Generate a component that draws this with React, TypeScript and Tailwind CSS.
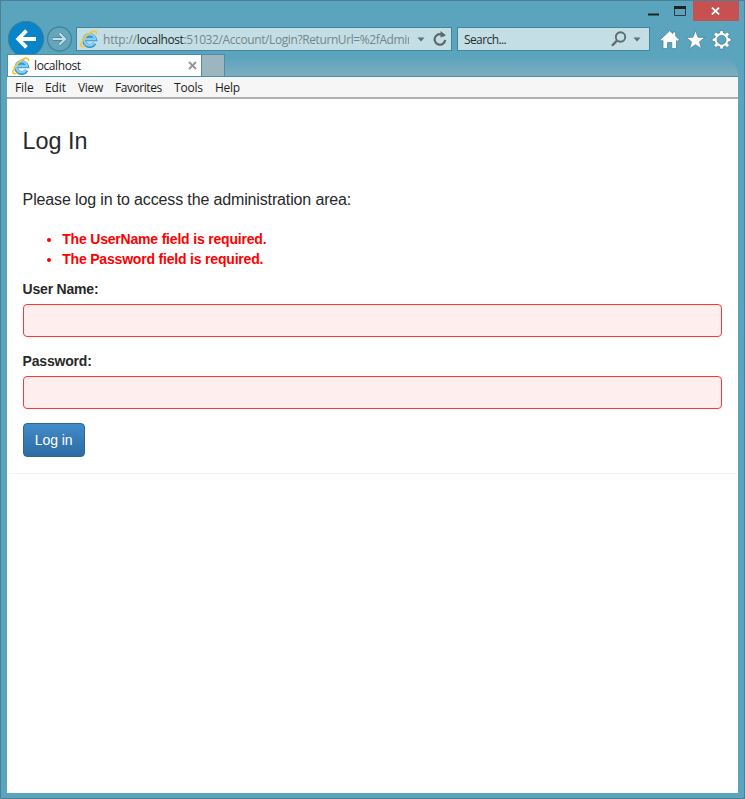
import React from "react";

const chrome = "font-['Open_Sans','Noto_Sans',sans-serif]";

function IeLogo() {
  return (
    <svg width="18" height="18" viewBox="0 0 18 18" fill="none" className="shrink-0">
      <path d="M14.600 13.200A5.500 5.500 0 1 1 15.100 9.200H5.500" stroke="#3a94cf" strokeWidth="3.900" />
      <path d="M14.100 13.100A5.500 5.500 0 1 1 15.100 9.200H5.500" stroke="#7fd0f5" strokeWidth="2.300" />
      <path d="M16.400 4.200C17 1.500 15.400.3 12.300 1.600 7.500 3.500 1.800 10 1 14.200c-.5 2.700 1.400 3 4.200 1.700" stroke="#f4c63a" strokeWidth="1.700" />
    </svg>
  );
}

function Caret() {
  return (
    <svg width="8" height="5" viewBox="0 0 8 5" className="shrink-0">
      <path d="M.5.5h7L4 4.500z" fill="#5d7077" />
    </svg>
  );
}

function TitleBar() {
  return (
    <div className="flex h-5 shrink-0 justify-end pr-[5px]">
      <svg width="38" height="20" viewBox="0 0 38 20">
        <path d="M0 13.500h11" stroke="#222" strokeWidth="2" />
        <path d="M26.500 6v8.500h11V6" stroke="#303a3e" fill="none" />
        <path d="M26 6.500h12" stroke="#222" strokeWidth="3" />
      </svg>
      <div className="ml-[7px] flex w-[46px] items-center justify-center bg-[#c75050]">
        <svg width="9" height="8" viewBox="0 0 9 8" className="-mt-px -ml-0.5">
          <path d="M.9.600l7.200 6.800M8.100.600L.9 7.400" stroke="#fff" strokeWidth="1.8" />
        </svg>
      </div>
    </div>
  );
}

function NavBar() {
  return (
    <div className="flex h-[33px] shrink-0 items-start overflow-hidden pl-[7px]">
      <svg width="66" height="37" viewBox="0 0 66 37" className="shrink-0">
        <circle cx="18" cy="18" r="17.700" fill="#0a84c9" stroke="#3b7f9d" />
        <path d="M28 18H10.500M18.500 9.700L10.200 18l8.300 8.300" stroke="#fff" strokeWidth="3.800" fill="none" />
        <circle cx="51.500" cy="18" r="12" fill="#65a6bc" stroke="#43859b" strokeWidth="1.300" />
        <path d="M45 18h12M51.500 12.500L57.100 18l-5.600 5.500" stroke="#417f94" strokeWidth="3.400" fill="none" />
        <path d="M45 18h12M51.500 12.500L57.100 18l-5.600 5.500" stroke="#c3dfe8" strokeWidth="2.200" fill="none" />
      </svg>
      <div className="ml-0.5 mt-1.5 flex h-6 w-[376px] items-center border border-[#44859c] bg-[#c4dee5] pl-[3px]">
        <IeLogo />
        <div className={"mt-0.5 ml-[5px] w-[306px] overflow-hidden whitespace-nowrap text-[12px] leading-[18px] text-[#75868c] tracking-[-0.4px] " + chrome}>
          <span className="tracking-[-0.2px]">http://</span><span className="text-[#202a2e]">localhost</span>:51032/Account/Login?ReturnUrl=%2fAdmin
        </div>
        <div className="ml-2 flex items-center gap-2">
          <Caret />
          <svg width="14" height="16" viewBox="0 0 14 16">
            <path d="M11.200 5.200A5.300 5.300 0 1 0 12.200 9" stroke="#5d6a6e" strokeWidth="2.200" fill="none" />
            <path d="M7.500 0v6.500l5.500-2.300z" fill="#5d6a6e" />
          </svg>
        </div>
      </div>
      <div className="ml-[5px] mt-1.5 flex h-6 w-[193px] items-center border border-[#44859c] bg-[#c4dee5] pl-1.5">
        <span className={"mt-0.5 w-[147px] text-[12px] leading-[18px] text-[#252d30] tracking-[-0.6px] " + chrome}>Search...</span>
        <svg width="16" height="16" viewBox="0 0 16 16">
          <circle cx="9.500" cy="6" r="4.700" stroke="#5d6a6e" strokeWidth="1.900" fill="none" />
          <path d="M5.800 9.700L1 14.800" stroke="#5d6a6e" strokeWidth="2.400" />
        </svg>
        <div className="ml-1.5"><Caret /></div>
      </div>
      <svg width="72" height="20" viewBox="0 0 72 20" className="ml-[10px] mt-[9px] shrink-0" fill="#fff" stroke="#417f94" strokeWidth=".7">
        <path d="M9.700.7l3.300 3V2h2.700v4.200l3.500 3.300-1.700 1.800-1-.9v8.200h-4.700v-6H7.500v6H3v-8.200l-1 .9L.4 9.500z" />
        <path d="M35.500.5l2.500 6.700 7 .3-5.500 4.300 1.900 6.900-5.900-4-5.900 4 1.900-6.900L26 7.500l7-.3z" />
        <path fillRule="evenodd" d="M59.600 3l.5-2.500h3l.5 2.500 1.500.6 2.100-1.500 2.200 2.200-1.500 2.100.6 1.500 2.500.4v3l-2.500.4-.6 1.500 1.500 2.100-2.200 2.200-2.100-1.500-1.500.6-.5 2.500h-3l-.5-2.500-1.500-.6-2.100 1.500-2.200-2.200 1.500-2.100-.6-1.500-2.500-.4v-3l2.500-.4.6-1.500-1.500-2.100L56 2.100l2.100 1.500zM61.600 5.300a4.500 4.500 0 1 0 .01 0z" />
      </svg>
    </div>
  );
}

function TabStrip() {
  return (
    <div className="mx-1.5 flex h-[23px] shrink-0 border-b border-[#4c8ea6]">
      <div className="flex w-[194px] items-center border-t border-l border-[#4c8ea6] bg-white pl-1">
        <IeLogo />
        <span className={"ml-1 w-[154px] text-[12px] leading-[18px] text-[#222] tracking-[-0.4px] " + chrome}>localhost</span>
        <svg width="9" height="9" viewBox="0 0 9 9" className="shrink-0">
          <path d="M1 1l7 7M8 1L1 8" stroke="#969696" strokeWidth="1.900" />
        </svg>
      </div>
      <div className="w-6 border border-b-0 border-[#4c8ea6] bg-[#9db5be]" />
      <div className="mt-1 grow rounded-tr-2xl bg-linear-to-b from-[#5ba4be] to-[#7eaebf]" />
    </div>
  );
}

function MenuBar() {
  return (
    <div className={"flex h-[22px] shrink-0 items-center gap-3 border-b-2 border-[#b0b0b0] bg-[#f6f6f6] pt-0.5 pl-2 text-[12px] leading-4 text-[#1e1e1e] " + chrome}>
      <span className="w-[18px] tracking-[-0.1px]">File</span>
      <span className="w-[21px] tracking-[-0.1px]">Edit</span>
      <span className="w-[25px] tracking-[-0.3px]">View</span>
      <span className="w-[47px] tracking-[-0.45px]">Favorites</span>
      <span className="w-[29px] tracking-[-0.2px]">Tools</span>
      <span className="tracking-[-0.3px]">Help</span>
    </div>
  );
}

function Field({ id, label, type }: { id: string; label: string; type: string }) {
  return (
    <div className="flex flex-col">
      <label htmlFor={id} className="h-[22px] text-[14px] leading-[22px] font-bold tracking-[-0.2px]">{label}</label>
      <input id={id} type={type} className="mt-1 h-[33px] w-full rounded-[4px] border border-[#ff3535] bg-[#ffeeee] px-3 outline-none" />
    </div>
  );
}

function LoginPage() {
  return (
    <main className="grow bg-white font-['Liberation_Sans',Arial,sans-serif] text-[#292929]">
      <div className="mx-0.5 flex h-[375px] flex-col border-b border-[#f3f3f3] pr-[14px] pl-[13.6px]">
        <h1 className="mt-[27px] text-[23.4px] leading-[30px]">Log In</h1>
        <p className="mt-8 text-[16px] leading-6 tracking-[-0.14px]">Please log in to access the administration area:</p>
        <ul className="mt-[18px] list-disc pl-[39.6px] text-[14px] leading-[19.5px] font-bold tracking-[-0.19px] text-[#ff0000]">
          <li>The UserName field is required.</li>
          <li>The Password field is required.</li>
        </ul>
        <form className="mt-[9px] flex flex-col gap-[13px]" onSubmit={(e) => e.preventDefault()}>
          <Field id="user" label="User Name:" type="text" />
          <Field id="password" label="Password:" type="password" />
          <button className="mt-px h-[34px] w-[62px] rounded-[4px] border border-[#2b669a] bg-linear-to-b from-[#428bca] to-[#2d6ca2] text-[14px] tracking-[-0.1px] text-white">Log in</button>
        </form>
      </div>
    </main>
  );
}

export default function App() {
  return (
    <div className="flex h-[799px] w-[745px] flex-col overflow-hidden border border-[#4a8196] bg-[#5ba4be]">
      <TitleBar />
      <NavBar />
      <TabStrip />
      <div className="mx-1.5 mb-[5px] flex grow flex-col">
        <MenuBar />
        <LoginPage />
      </div>
    </div>
  );
}
